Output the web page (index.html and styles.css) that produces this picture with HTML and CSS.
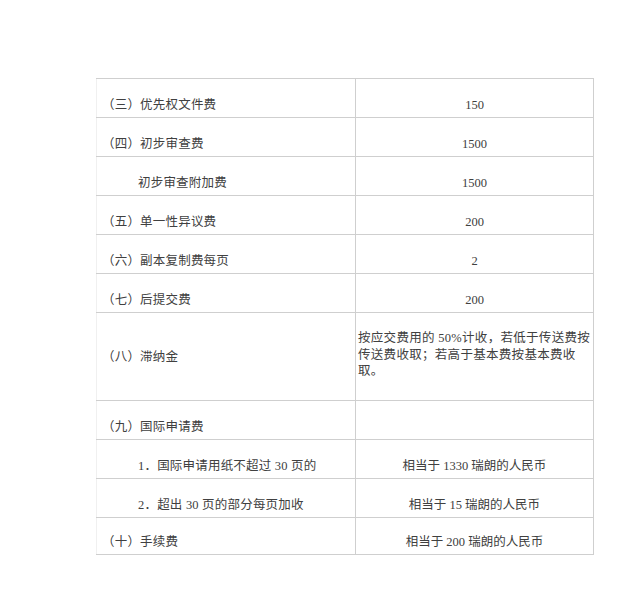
FILE: index.html
```html
<!DOCTYPE html>
<html>
<head>
<meta charset="utf-8">
<link rel="stylesheet" href="styles.css">
</head>
<body>
<div class="page">
<table class="fees">
<colgroup><col class="c1"><col class="c2"></colgroup>
<tr class="r39"><td class="l">（三）优先权文件费</td><td class="v">150</td></tr>
<tr class="r39"><td class="l">（四）初步审查费</td><td class="v">1500</td></tr>
<tr class="r39"><td class="l ind">初步审查附加费</td><td class="v">1500</td></tr>
<tr class="r39"><td class="l">（五）单一性异议费</td><td class="v">200</td></tr>
<tr class="r39"><td class="l">（六）副本复制费每页</td><td class="v">2</td></tr>
<tr class="r39"><td class="l">（七）后提交费</td><td class="v">200</td></tr>
<tr class="r88"><td class="l mid">（八）滞纳金</td><td class="txt">按应交费用的 50%计收，若低于传送费按传送费收取；若高于基本费按基本费收取。</td></tr>
<tr class="r39"><td class="l">（九）国际申请费</td><td class="v"></td></tr>
<tr class="r39"><td class="l ind">1．国际申请用纸不超过 30 页的</td><td class="v">相当于 1330 瑞朗的人民币</td></tr>
<tr class="r39"><td class="l ind">2．超出 30 页的部分每页加收</td><td class="v">相当于 15 瑞朗的人民币</td></tr>
<tr class="r37"><td class="l">（十）手续费</td><td class="v">相当于 200 瑞朗的人民币</td></tr>
</table>
</div>
</body>
</html>
```
FILE: styles.css
```css
html, body {
  margin: 0;
  padding: 0;
  background: #ffffff;
}
.page {
  padding: 78px 0 0 96px;
}
.fees {
  border-collapse: collapse;
  table-layout: fixed;
  width: 497px;
  font-family: "Liberation Serif", "Noto Sans CJK SC", serif;
  font-size: 12.5px;
  color: #404040;
}
.c1 { width: 259px; }
.c2 { width: 238px; }
.fees td {
  border-top: 1px solid #cfcfcf;
  border-bottom: 1px solid #cfcfcf;
  padding: 0 0 4px 0;
  vertical-align: bottom;
  line-height: 16px;
}
.fees td.l {
  border-left: 1px solid #f0f0f0;
  border-right: 1px solid #cfcfcf;
  padding-left: 5px;
  white-space: nowrap;
  letter-spacing: 0.2px;
}
.fees td.v {
  border-right: 1px solid #cfcfcf;
  text-align: center;
}
.fees td.ind { padding-left: 41px; }
.fees td.mid { vertical-align: middle; padding-bottom: 0; }
.fees td.txt {
  border-right: 1px solid #cfcfcf;
  vertical-align: middle;
  padding: 0 0 3px 2px;
  line-height: 16.5px;
  letter-spacing: 0.3px;
}
.r39 { height: 39px; }
.r88 { height: 88px; }
.r37 { height: 37px; }
```
